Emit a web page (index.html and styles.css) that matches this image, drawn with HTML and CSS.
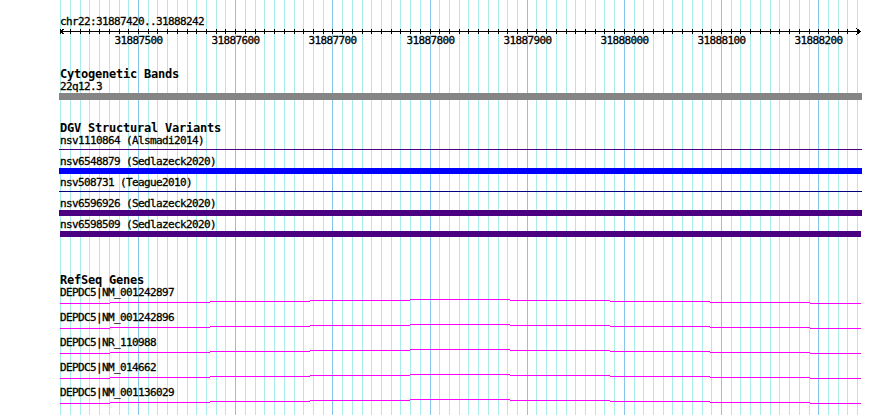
FILE: index.html
```html
<!DOCTYPE html>
<html>
<head>
    <title>chr22:31887420..31888242</title>
    <link rel="stylesheet" href="styles.css">
</head>
<body>
    <div class="panel">
        <svg class="grid" id="grid" width="802" height="415"></svg>

        <div class="tracks">
            <div class="ruler">
                <div class="ruler-title">chr22:31887420..31888242</div>
                <svg class="ruler-svg" id="ruler" width="802" height="20"></svg>
            </div>

            <div class="track track-cyto">
                <h2>Cytogenetic Bands</h2>
                <div class="label">22q12.3</div>
                <div class="band"></div>
            </div>

            <div class="track track-dgv">
                <h2>DGV Structural Variants</h2>
                <div class="sv-row">
                    <div class="label">nsv1110864 (Alsmadi2014)</div>
                    <div class="glyph"><div class="sv-line sv-purple"></div></div>
                </div>
                <div class="sv-row">
                    <div class="label">nsv6548879 (Sedlazeck2020)</div>
                    <div class="glyph"><div class="sv-bar sv-blue"></div></div>
                </div>
                <div class="sv-row">
                    <div class="label">nsv508731 (Teague2010)</div>
                    <div class="glyph"><div class="sv-line sv-navy"></div></div>
                </div>
                <div class="sv-row">
                    <div class="label">nsv6596926 (Sedlazeck2020)</div>
                    <div class="glyph"><div class="sv-bar sv-purple"></div></div>
                </div>
                <div class="sv-row">
                    <div class="label">nsv6598509 (Sedlazeck2020)</div>
                    <div class="glyph"><div class="sv-bar sv-purple" style="margin-left:0;width:801px"></div></div>
                </div>
            </div>

            <div class="track track-genes">
                <h2>RefSeq Genes</h2>
                <div class="gene-row">
                    <div class="label">DEPDC5|NM_001242897</div>
                    <svg class="gene" width="802" height="12"><path d="M-0.5 4.5H50M50 3.5H150M150 2.5H250M250 1.5H350M350 0.5H450M450 1.5H550M550 2.5H650M650 3.5H750M750 4.5H801"/></svg>
                </div>
                <div class="gene-row">
                    <div class="label">DEPDC5|NM_001242896</div>
                    <svg class="gene" width="802" height="12"><path d="M-0.5 4.5H50M50 3.5H150M150 2.5H250M250 1.5H350M350 0.5H450M450 1.5H550M550 2.5H650M650 3.5H750M750 4.5H801"/></svg>
                </div>
                <div class="gene-row">
                    <div class="label">DEPDC5|NR_110988</div>
                    <svg class="gene" width="802" height="12"><path d="M-0.5 4.5H50M50 3.5H150M150 2.5H250M250 1.5H350M350 0.5H450M450 1.5H550M550 2.5H650M650 3.5H750M750 4.5H801"/></svg>
                </div>
                <div class="gene-row">
                    <div class="label">DEPDC5|NM_014662</div>
                    <svg class="gene" width="802" height="12"><path d="M-0.5 4.5H50M50 3.5H150M150 2.5H250M250 1.5H350M350 0.5H450M450 1.5H550M550 2.5H650M650 3.5H750M750 4.5H801"/></svg>
                </div>
                <div class="gene-row">
                    <div class="label">DEPDC5|NM_001136029</div>
                    <svg class="gene" width="802" height="12"><path d="M-0.5 4.5H50M50 3.5H150M150 2.5H250M250 1.5H350M350 0.5H450M450 1.5H550M550 2.5H650M650 3.5H750M750 4.5H801"/></svg>
                </div>
            </div>
        </div>
    </div>

    <script>
        var START = 31887420;
        var END = 31888242;
        var SCALE = 0.9717;   // pixels per bp
        var NS = 'http://www.w3.org/2000/svg';

        function xOf(bp) {
            return Math.round(0.3 + (bp - START) * SCALE);
        }

        function el(name, attrs, text) {
            var node = document.createElementNS(NS, name);
            for (var k in attrs) node.setAttribute(k, attrs[k]);
            if (text) node.textContent = text;
            return node;
        }

        var grid = document.getElementById('grid');
        var ruler = document.getElementById('ruler');

        // main axis with arrows on both ends
        ruler.appendChild(el('path', {
            'class': 'axis',
            d: 'M0 3.5H800.5M4.5 0.5L0.5 3.5L4.5 6.5M796.5 0.5L800.5 3.5L796.5 6.5'
        }));

        for (var bp = Math.ceil(START / 10) * 10; bp <= END; bp += 10) {
            var x = xOf(bp) + 0.5;
            var major = bp % 100 === 0;
            grid.appendChild(el('line', {
                'class': major ? 'major' : 'minor',
                x1: x, x2: x, y1: 0, y2: 415
            }));
            ruler.appendChild(el('line', { 'class': 'tick', x1: x, x2: x, y1: 1, y2: 6 }));
            if (major) {
                ruler.appendChild(el('text', { 'class': 'tick-label', x: x, y: 16 }, String(bp)));
            }
        }
    </script>
</body>
</html>
```

FILE: styles.css
```css
body {
  margin: 0;
  background: #fff;
  font-family: "DejaVu Sans Mono", monospace;
  color: #000;
}

.panel {
  position: relative;
  width: 890px;
  height: 415px;
  overflow: hidden;
}

.grid {
  position: absolute;
  left: 60px;
  top: 0;
  shape-rendering: crispEdges;
}

.grid .minor {
  stroke: #a8ecec;
  stroke-width: 1;
}

.grid .major {
  stroke: #86c6ec;
  stroke-width: 1;
}

.tracks {
  position: relative;
  margin-left: 60px;
  width: 802px;
  padding-top: 15px;
}

.ruler-title,
.label {
  font-size: 11px;
  line-height: 13px;
  letter-spacing: -0.62px;
  white-space: nowrap;
  -webkit-text-stroke: 0.3px #000;
}

.ruler-svg {
  display: block;
  overflow: visible;
}

.ruler-svg .axis,
.ruler-svg .tick {
  stroke: #000;
  stroke-width: 1;
  fill: none;
  shape-rendering: crispEdges;
}

.tick-label {
  font-family: "DejaVu Sans Mono", monospace;
  font-size: 11px;
  letter-spacing: -0.62px;
  text-anchor: middle;
  fill: #000;
  stroke: #000;
  stroke-width: 0.3px;
}

.track h2 {
  margin: 0;
  font-size: 12px;
  line-height: 12px;
  font-weight: bold;
  letter-spacing: -0.22px;
  white-space: nowrap;
}

.track-cyto {
  margin-top: 20px;
}

.band {
  margin-left: -1px;
  width: 803px;
  height: 7px;
  background: #858585;
}

.track-dgv {
  margin-top: 22px;
}

.sv-row {
  height: 21px;
}

.glyph {
  height: 8px;
}

.sv-line {
  margin-left: -1px;
  width: 803px;
  height: 1px;
  margin-top: 2px;
}

.sv-bar {
  margin-left: -1px;
  width: 803px;
  height: 6px;
}

.sv-blue {
  background: #0000ff;
}

.sv-navy {
  background: #000080;
}

.sv-purple {
  background: #4b0082;
}

.track-genes {
  margin-top: 35px;
}

.gene-row {
  height: 25px;
}

.gene {
  display: block;
  overflow: visible;
}

.gene path {
  stroke: #ff00ff;
  stroke-width: 1;
  fill: none;
  shape-rendering: crispEdges;
}
```
